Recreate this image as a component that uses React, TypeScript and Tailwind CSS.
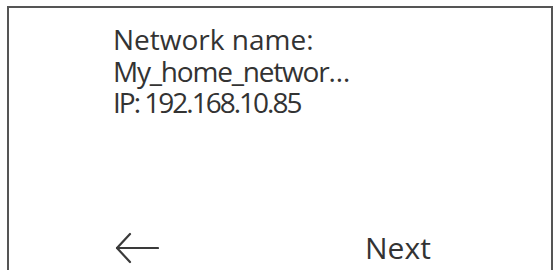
import React from "react";

const font = { fontFamily: '"Open Sans", "Noto Sans", sans-serif' };

const BackArrow = () => (
  <svg width="44" height="32" viewBox="0 0 44 32" fill="none" stroke="#3a3a3a" strokeWidth="2.2" strokeLinecap="round" strokeLinejoin="round">
    <path d="M43 16H2" />
    <path d="M15 2L2 16l13 14" />
  </svg>
);

export default function App() {
  return (
    <div className="w-[556px] h-[270px] overflow-hidden bg-white text-[#333]" style={font}>
      {/* only the descenders of the line above the panel are in view */}
      <div className="h-[6px] overflow-hidden relative">
        <div className="absolute left-[40px] top-[-32px] text-[26px] leading-[30px] whitespace-nowrap text-[#777]">
          apply your settings by going
        </div>
      </div>

      <div className="ml-[7px] w-[546px] h-[290px] border-2 border-[#555] flex flex-col">
        <div className="pl-[104px] pt-[17px] flex flex-col gap-[3.5px] text-[28px] leading-[28px]">
          <span>Network name:</span>
          <span className="tracking-[-1.2px]">My_home_networ…</span>
          <span className="tracking-[-2px]">IP: 192.168.10.85</span>
        </div>

        <div className="pl-[106px] mt-[116px] flex items-center">
          <BackArrow />
          <span className="ml-[206px] text-[30px] leading-[30px]">Next</span>
        </div>
      </div>
    </div>
  );
}
